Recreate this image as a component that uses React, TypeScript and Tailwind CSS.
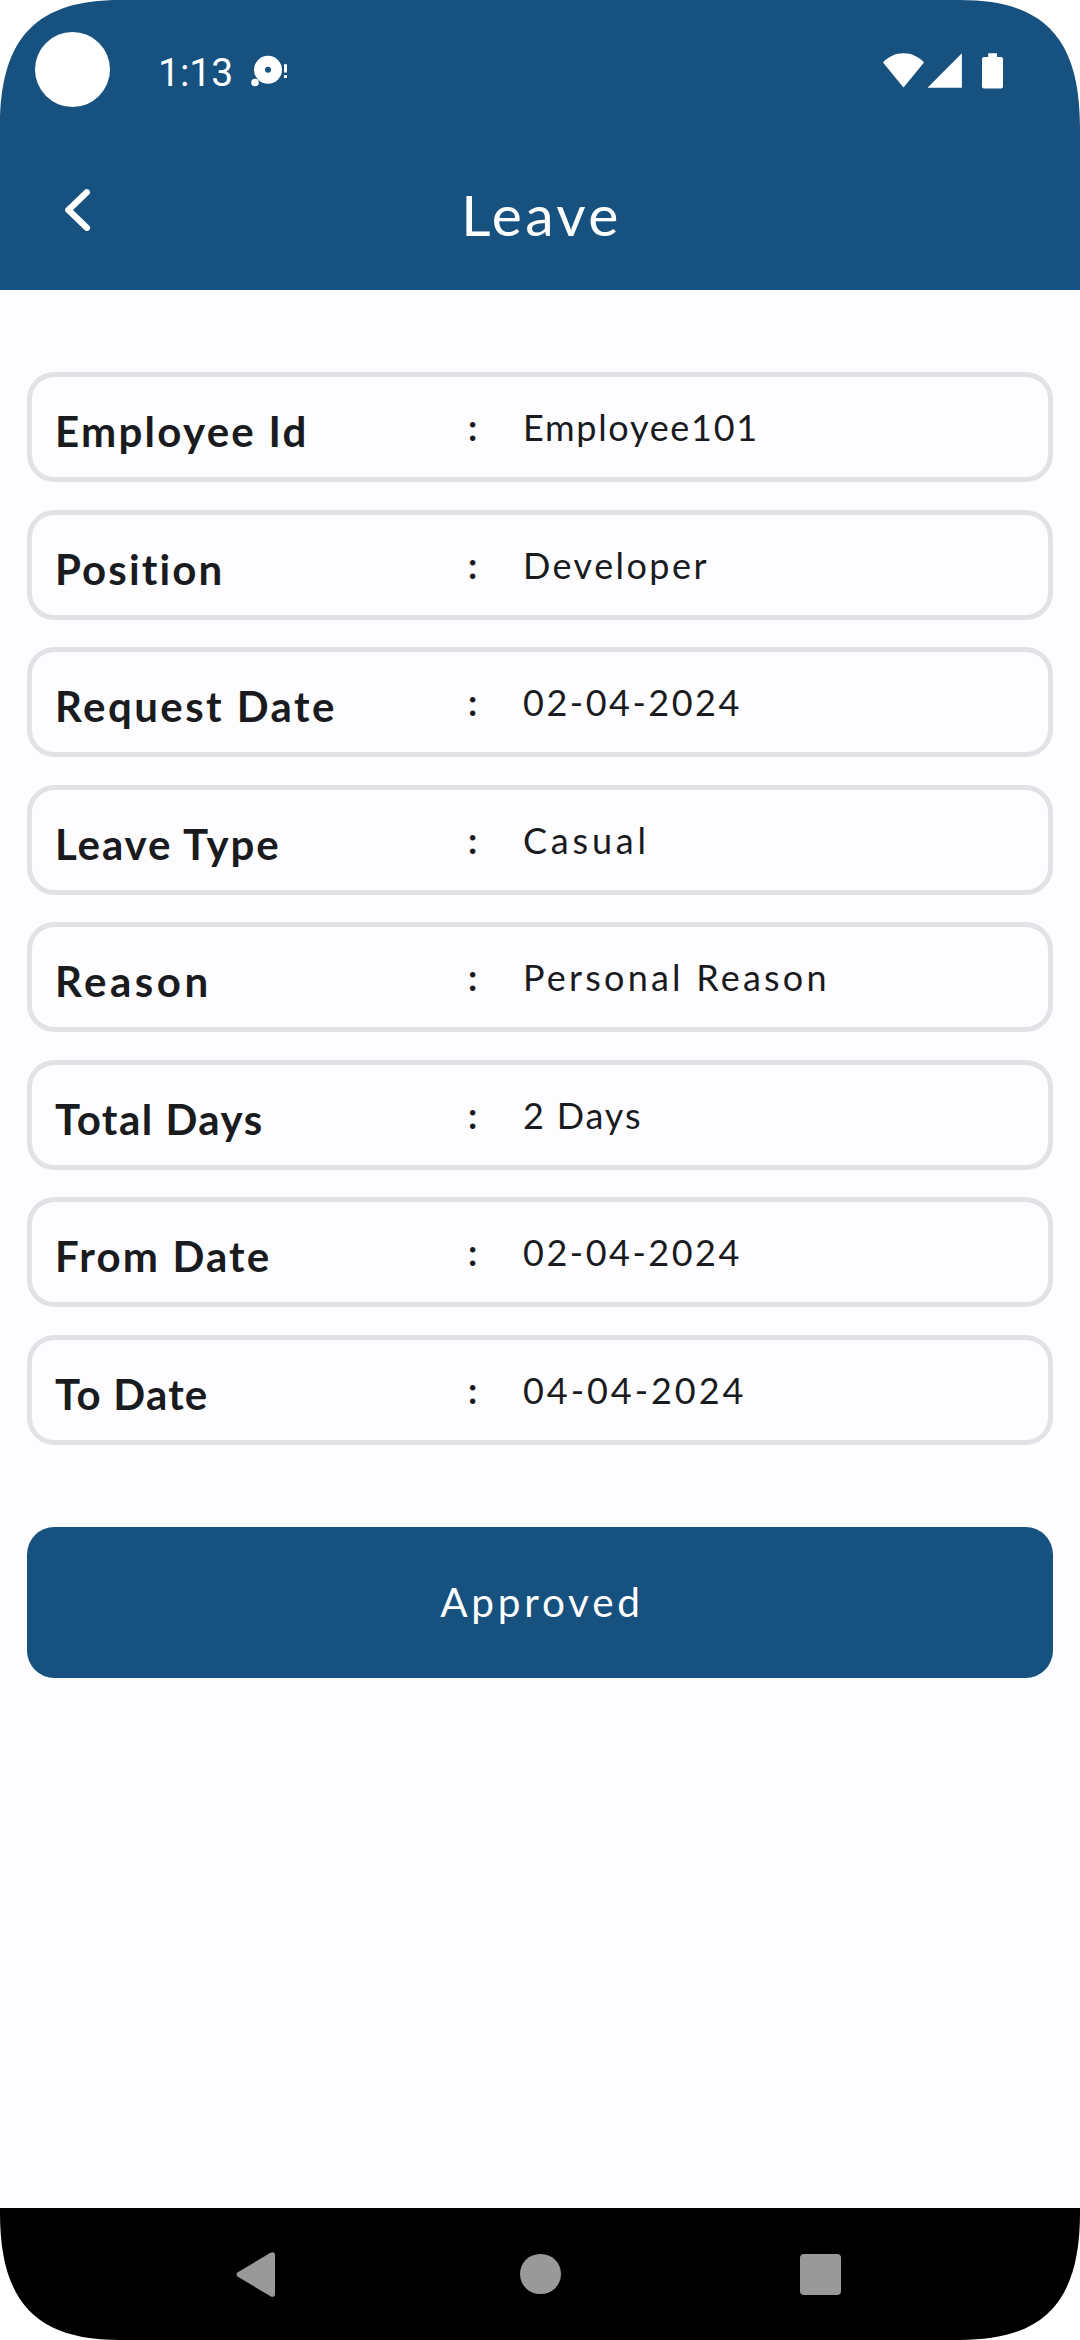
import React from 'react';

type Field = { label: string; value: string; labelTracking: string; valueTracking: string };

const fields: Field[] = [
  { label: 'Employee Id', value: 'Employee101', labelTracking: 'tracking-[2.27px]', valueTracking: 'tracking-[1.7px]' },
  { label: 'Position', value: 'Developer', labelTracking: 'tracking-[2.1px]', valueTracking: 'tracking-[2.44px]' },
  { label: 'Request Date', value: '02-04-2024', labelTracking: 'tracking-[2.43px]', valueTracking: 'tracking-[2.5px]' },
  { label: 'Leave Type', value: 'Casual', labelTracking: 'tracking-[1.87px]', valueTracking: 'tracking-[3.8px]' },
  { label: 'Reason', value: 'Personal Reason', labelTracking: 'tracking-[3.5px]', valueTracking: 'tracking-[3.2px]' },
  { label: 'Total Days', value: '2 Days', labelTracking: 'tracking-[1.5px]', valueTracking: 'tracking-[1.85px]' },
  { label: 'From Date', value: '02-04-2024', labelTracking: 'tracking-[2.15px]', valueTracking: 'tracking-[2.5px]' },
  { label: 'To Date', value: '04-04-2024', labelTracking: 'tracking-[1.25px]', valueTracking: 'tracking-[2.96px]' },
];

function Corner({ className }: { className: string }) {
  return (
    <svg className={`absolute h-[128px] w-[128px] ${className}`} viewBox="0 0 128 128" fill="#fff">
      <path d="M0 0H120C38 0 0 36 0 127Z" />
    </svg>
  );
}

function StatusBar() {
  return (
    <div className="flex h-[140px] items-start text-white">
      <div className="mt-8 ml-[35px] size-[75px] rounded-full bg-white" />
      <div className="mt-[49px] ml-[48px] w-[80px] font-['Roboto',sans-serif] text-[39px] leading-[48px]">1:13</div>
      <svg className="mt-[50px] ml-[10px] h-10 w-[42px]" viewBox="248 50 42 40" fill="currentColor">
        <path
          fillRule="evenodd"
          d="M268 55.8a14 14 0 1 0 0 28a14 14 0 1 0 0-28ZM268 66.8a3 3 0 1 1 0 6a3 3 0 1 1 0-6Z"
        />
        <circle cx="255" cy="82.5" r="3.8" />
        <path d="M284 64.3h3v8.2h-3zM284 75h3v3h-3z" />
      </svg>
      <svg className="mt-[50px] mr-[74px] ml-auto h-10 w-[126px]" viewBox="880 50 126 40" fill="currentColor">
        <path d="M903.5 87.6L883 62.4C888.5 56.5 895.5 53.2 903.5 53.2S918.5 56.5 924 62.4Z" />
        <path d="M927.5 87.7L961.9 53.3V87.7Z" />
        <path d="M988.2 53.2H997V57H1001A2 2 0 0 1 1003 59V86.6A2 2 0 0 1 1001 88.6H984A2 2 0 0 1 982 86.6V59A2 2 0 0 1 984 57H988.2Z" />
      </svg>
    </div>
  );
}

function TitleBar() {
  return (
    <div className="grid h-[150px] grid-cols-[1fr_auto_1fr] items-start">
      <svg className="mt-[46px] ml-[60px] h-12 w-8" viewBox="60 186 32 48" fill="none" stroke="#fff">
        <path
          d="M86.8 192.3L68.4 210L86.8 227.7"
          strokeWidth="6.4"
          strokeLinecap="round"
          strokeLinejoin="round"
        />
      </svg>
      <h1 className="mt-[39px] pl-[3px] text-[57px] leading-[70px] tracking-[3.4px] text-white">Leave</h1>
    </div>
  );
}

function FieldRow({ label, value, labelTracking, valueTracking }: Field) {
  return (
    <div className="flex h-[110px] items-start rounded-[27.5px] border-[5px] border-[#e1e2e8] pl-[23px]">
      <dt className={`mt-[29px] w-[413px] text-[42px] leading-[50px] font-bold ${labelTracking}`}>{label}</dt>
      <span className="mt-[28px] w-[55px] text-[36px] leading-[44px] font-bold">:</span>
      <dd className={`mt-[28px] text-[36px] leading-[44px] ${valueTracking}`}>{value}</dd>
    </div>
  );
}

function NavigationBar() {
  return (
    <nav className="flex h-[132px] items-center bg-black text-[#999]">
      <svg className="ml-[236px] h-[46px] w-10" viewBox="236 2251 40 46" fill="currentColor">
        <path d="M237.5 2272.5Q235.5 2274.5 237.5 2276.5L270.5 2296.3Q275 2298 275 2294V2255Q275 2251 270.5 2252.7Z" />
      </svg>
      <div className="ml-[244px] size-[40.5px] rounded-full bg-current" />
      <div className="ml-[239.5px] size-[41px] rounded-[4px] bg-current" />
    </nav>
  );
}

export default function App() {
  return (
    <div className="relative flex h-[2340px] w-[1080px] flex-col overflow-hidden bg-[#fdfdff] font-['Lato',sans-serif] text-[#1a1b1e]">
      <header className="bg-[#17517f]">
        <StatusBar />
        <TitleBar />
      </header>
      <main className="flex flex-1 flex-col px-[27px] pt-[82.4px]">
        <dl className="flex flex-col gap-[27.5px]">
          {fields.map((field) => (
            <FieldRow key={field.label} {...field} />
          ))}
        </dl>
        <button className="mt-[82px] h-[151.5px] rounded-[27.5px] bg-[#17517f] pl-[4px] text-[40.5px] tracking-[3.75px] text-white">
          Approved
        </button>
      </main>
      <NavigationBar />
      <Corner className="top-0 left-0" />
      <Corner className="top-0 right-0 -scale-x-100" />
      <Corner className="bottom-0 left-0 -scale-y-100" />
      <Corner className="right-0 bottom-0 rotate-180" />
    </div>
  );
}
